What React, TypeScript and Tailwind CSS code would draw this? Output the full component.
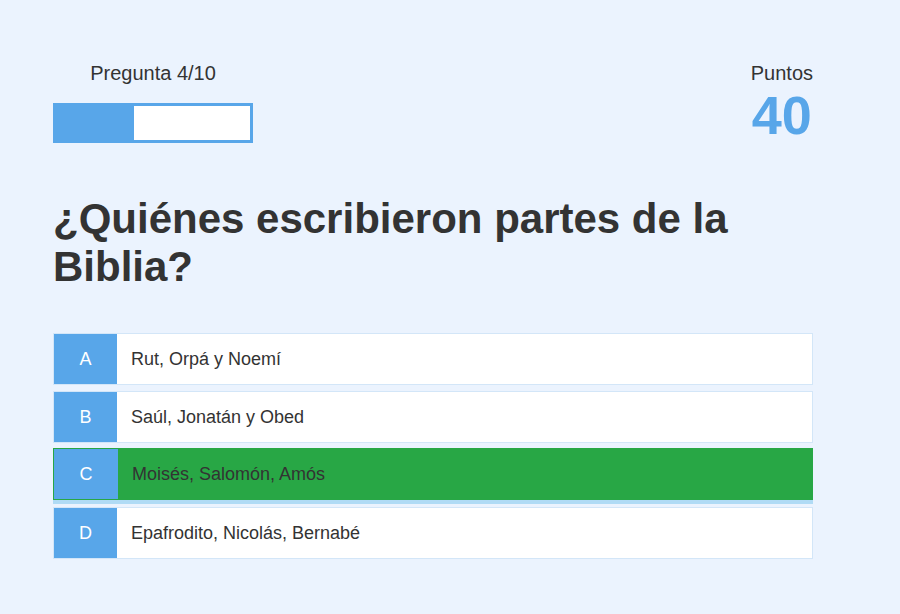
const options = [
  { letter: 'A', text: 'Rut, Orpá y Noemí' },
  { letter: 'B', text: 'Saúl, Jonatán y Obed' },
  { letter: 'C', text: 'Moisés, Salomón, Amós', correct: true },
  { letter: 'D', text: 'Epafrodito, Nicolás, Bernabé' },
];

export default function App() {
  const current = 4;
  const total = 10;
  const progress = (current / total) * 100;

  return (
    <div className="min-h-[614px] w-full bg-[#ebf3fe] font-['Liberation_Sans',Arial,sans-serif] text-[#333]">
      <div className="ml-[53px] w-[760px] pt-[59px]">
        <div className="flex items-start justify-between">
          <div className="flex w-[200px] flex-col items-center">
            <div className="text-[20px] leading-[28px]">Pregunta {current}/{total}</div>
            <div className="mt-[16px] h-[40px] w-[200px] border-[3px] border-[#58a6e9] bg-white">
              <div className="h-full bg-[#58a6e9]" style={{ width: `${progress}%` }} />
            </div>
          </div>
          <div className="flex flex-col items-center">
            <div className="text-[20px] leading-[28px]">Puntos</div>
            <div className="mt-[0px] text-[54px] font-bold leading-[56px] text-[#58a6e9]">40</div>
          </div>
        </div>

        <h1 className="mt-[52px] text-[42px] font-bold leading-[48px] text-[#333]">
          ¿Quiénes escribieron partes de la Biblia?
        </h1>

        <div className="mt-[42px] flex flex-col gap-[6px]">
          {options.map((o) => (
            <div
              key={o.letter}
              className={
                o.correct
                  ? 'flex h-[52px] -translate-y-px border border-[#28a745] bg-[#28a745] shadow-[0_4px_0_#b0dbf5]'
                  : 'flex h-[52px] border border-[#d3e6f8] bg-white'
              }
            >
              <div
                className={
                  o.correct
                    ? 'flex w-[64px] items-center justify-center bg-[#58a6e9] text-[18px] text-white'
                    : 'flex w-[63px] items-center justify-center bg-[#58a6e9] text-[18px] text-white'
                }
              >
                {o.letter}
              </div>
              <div className="flex items-center pl-[14px] text-[18px] text-[#333]">{o.text}</div>
            </div>
          ))}
        </div>
      </div>
    </div>
  );
}
